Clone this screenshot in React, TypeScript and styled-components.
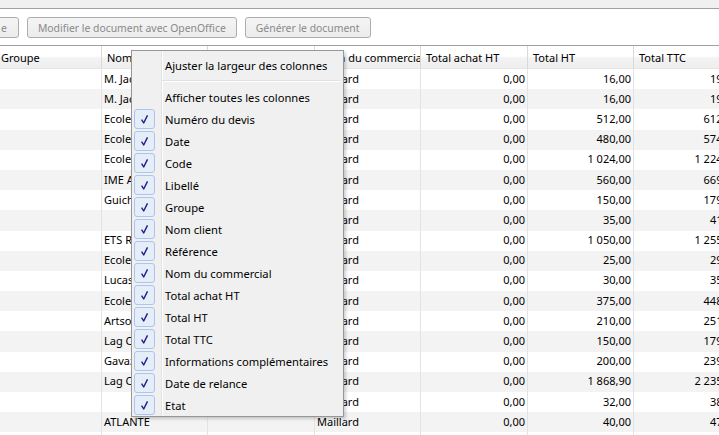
import React from "react";
import styled, { createGlobalStyle } from "styled-components";

const GlobalStyle = createGlobalStyle`
  html, body {
    margin: 0;
    padding: 0;
    background: #f0f0f0;
    overflow: hidden;
  }
`;

interface IRow {
  name: string;
  ht: number;
}

const rows: IRow[] = [
  { name: "M. Jacquet", ht: 16 },
  { name: "M. Jacquet", ht: 16 },
  { name: "Ecole Jules Ferry", ht: 512 },
  { name: "Ecole Pasteur", ht: 480 },
  { name: "Ecole Saint Joseph", ht: 1024 },
  { name: "IME Arc en ciel", ht: 560 },
  { name: "Guichet", ht: 150 },
  { name: "", ht: 35 },
  { name: "ETS Robin", ht: 1050 },
  { name: "Ecole Victor Hugo", ht: 25 },
  { name: "Lucas", ht: 30 },
  { name: "Ecole Jean Moulin", ht: 375 },
  { name: "Artsonic", ht: 210 },
  { name: "Lag Conseil", ht: 150 },
  { name: "Gavazzi", ht: 200 },
  { name: "Lag Conseil", ht: 1868.9 },
  { name: "", ht: 32 },
  { name: "ATLANTE", ht: 40 },
  { name: "Ecole Curie", ht: 60 },
];

const columns = [
  "Groupe",
  "Nom client",
  "Référence",
  "Nom du commercial",
  "Total achat HT",
  "Total HT",
  "Total TTC",
];

const menuColumns = [
  "Numéro du devis",
  "Date",
  "Code",
  "Libellé",
  "Groupe",
  "Nom client",
  "Référence",
  "Nom du commercial",
  "Total achat HT",
  "Total HT",
  "Total TTC",
  "Informations complémentaires",
  "Date de relance",
  "Etat",
];

const fmt = (n: number) => {
  const [int, dec] = n.toFixed(2).split(".");
  return int.replace(/\B(?=(\d{3})+(?!\d))/g, " ") + "," + dec;
};

const Page = styled.div`
  position: relative;
  width: 719px;
  height: 435px;
  overflow: hidden;
  background: #f0f0f0;
`;

const TopStrip = styled.div`
  height: 8px;
  border-bottom: 1px solid #a0a0a0;
`;

const Toolbar = styled.div`
  display: flex;
  align-items: flex-start;
  gap: 8px;
  height: 37px;
  padding-top: 8px;
  box-sizing: border-box;
  background: #ffffff;
  border-bottom: 1px solid #a0a0a0;
`;

const Button = styled.div<{ $clipped?: boolean }>`
  display: flex;
  align-items: center;
  height: 21px;
  box-sizing: border-box;
  padding: ${(p) => (p.$clipped ? "0 11px 0 9px" : "0 10px")};
  margin-left: ${(p) => (p.$clipped ? "-9px" : "0")};
  border: 1px solid #adadad;
  border-radius: 3px;
  background: linear-gradient(#f4f4f4, #ececec);
  color: #8a8a8a;
  font-family: "Noto Sans", sans-serif;
  font-size: 10.4px;
  white-space: nowrap;
`;

const Table = styled.div`
  display: grid;
  grid-template-columns: 106px 106px 107px 106px 107px 106px 107px;
  grid-template-rows: 23px;
  grid-auto-rows: 20.2px;
  margin-left: -4px;
  width: 745px;
  background: #ffffff;
  font-family: "Noto Sans", sans-serif;
  font-size: 11px;
  color: #000;
`;

const HeadCell = styled.div`
  display: flex;
  align-items: center;
  padding-left: 5px;
  box-sizing: border-box;
  background: linear-gradient(#ffffff 0%, #ffffff 45%, #f3f3f4 55%, #eeeeef 100%);
  border-right: 1px solid #d9d9d9;
  border-bottom: 1px solid #e5e5e5;
  white-space: nowrap;
  overflow: hidden;
`;

const Cell = styled.div<{ $alt: boolean; $num?: boolean }>`
  display: flex;
  align-items: center;
  justify-content: ${(p) => (p.$num ? "flex-end" : "flex-start")};
  padding: 0 2px 2px;
  background: ${(p) => (p.$alt ? "#f3f3f3" : "#ffffff")};
  border-right: 1px solid #e3e3e3;
  white-space: nowrap;
  overflow: hidden;
`;

const Menu = styled.div`
  position: absolute;
  left: 131px;
  top: 50px;
  width: 213px;
  box-sizing: border-box;
  padding-top: 3px;
  border: 1px solid #979797;
  background:
    linear-gradient(
      to right,
      transparent 29px,
      #e2e3e3 29px,
      #e2e3e3 30px,
      #ffffff 30px,
      #ffffff 31px,
      transparent 31px
    ),
    #f0f0f0;
  box-shadow: 2px 2px 3px rgba(0, 0, 0, 0.18);
  font-family: "Noto Sans", sans-serif;
  font-size: 11.2px;
  color: #000;
`;

const MenuItem = styled.div`
  display: flex;
  align-items: center;
  height: 22px;
  padding-left: 2px;
`;

const CheckBox = styled.div`
  display: flex;
  align-items: center;
  justify-content: center;
  width: 21px;
  height: 20px;
  box-sizing: border-box;
  border: 1px solid #aac6ee;
  border-radius: 3px;
  background: #e5edf8;
`;

const IconSlot = styled.div`
  width: 21px;
`;

const Label = styled.span`
  margin-left: 10px;
  white-space: nowrap;
`;

const Separator = styled.div`
  height: 10px;
  display: flex;
  align-items: center;
  padding-left: 30px;
  padding-right: 3px;

  &::after {
    content: "";
    flex: 1;
    height: 0;
    border-top: 1px solid #e0e0e0;
    border-bottom: 1px solid #ffffff;
  }
`;

const Check = () => (
  <svg width="13" height="13" viewBox="0 0 13 13">
    <path
      d="M3.6 6.6 L5.7 10 L9.5 2.4"
      fill="none"
      stroke="#1c1c8e"
      strokeWidth="1.4"
      strokeLinejoin="round"
    />
  </svg>
);

function App() {
  return (
    <Page>
      <GlobalStyle />
      <TopStrip />
      <Toolbar>
        <Button $clipped>e</Button>
        <Button>Modifier le document avec OpenOffice</Button>
        <Button>Générer le document</Button>
      </Toolbar>
      <Table>
        {columns.map((c) => (
          <HeadCell key={c}>{c}</HeadCell>
        ))}
        {rows.map((r, i) => {
          const alt = i % 2 === 1;
          return (
            <React.Fragment key={i}>
              <Cell $alt={alt} />
              <Cell $alt={alt}>{r.name}</Cell>
              <Cell $alt={alt} />
              <Cell $alt={alt}>Maillard</Cell>
              <Cell $alt={alt} $num>
                0,00
              </Cell>
              <Cell $alt={alt} $num>
                {fmt(r.ht)}
              </Cell>
              <Cell $alt={alt} $num>
                {fmt(r.ht * 1.196)}
              </Cell>
            </React.Fragment>
          );
        })}
      </Table>
      <Menu>
        <MenuItem>
          <IconSlot />
          <Label>Ajuster la largeur des colonnes</Label>
        </MenuItem>
        <Separator />
        <MenuItem>
          <IconSlot />
          <Label>Afficher toutes les colonnes</Label>
        </MenuItem>
        {menuColumns.map((m) => (
          <MenuItem key={m}>
            <CheckBox>
              <Check />
            </CheckBox>
            <Label>{m}</Label>
          </MenuItem>
        ))}
      </Menu>
    </Page>
  );
}

export default App;
